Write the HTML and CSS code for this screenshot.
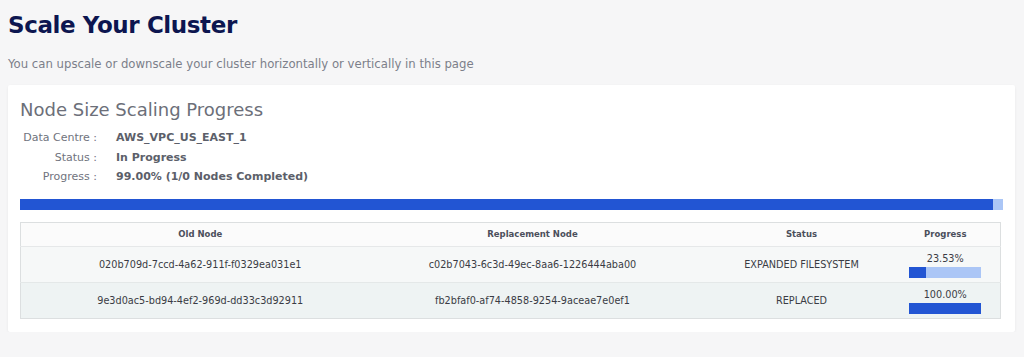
FILE: index.html
```html
<!DOCTYPE html>
<html>
<head>
<meta charset="utf-8">
<link rel="stylesheet" href="styles.css">
</head>
<body>
<div class="page">
  <h1 class="title">Scale Your Cluster</h1>
  <p class="subtitle">You can upscale or downscale your cluster horizontally or vertically in this page</p>
  <section class="card">
    <h2 class="card-title">Node Size Scaling Progress</h2>
    <div class="info">
      <div class="info-label">Data Centre :</div><div class="info-value">AWS_VPC_US_EAST_1</div>
      <div class="info-label">Status :</div><div class="info-value">In Progress</div>
      <div class="info-label">Progress :</div><div class="info-value">99.00% (1/0 Nodes Completed)</div>
    </div>
    <div class="bar main-bar"><div class="bar-fill" style="width:99%"></div></div>
    <table class="nodes">
      <colgroup>
        <col class="c1"><col class="c2"><col class="c3"><col class="c4">
      </colgroup>
      <thead>
        <tr><th>Old Node</th><th>Replacement Node</th><th class="stat">Status</th><th class="prog">Progress</th></tr>
      </thead>
      <tbody>
        <tr class="r1">
          <td>020b709d-7ccd-4a62-911f-f0329ea031e1</td>
          <td>c02b7043-6c3d-49ec-8aa6-1226444aba00</td>
          <td class="stat">EXPANDED FILESYSTEM</td>
          <td class="prog"><div class="pct">23.53%</div><div class="bar cell-bar"><div class="bar-fill" style="width:23.53%"></div></div></td>
        </tr>
        <tr class="r2">
          <td>9e3d0ac5-bd94-4ef2-969d-dd33c3d92911</td>
          <td>fb2bfaf0-af74-4858-9254-9aceae7e0ef1</td>
          <td class="stat">REPLACED</td>
          <td class="prog"><div class="pct">100.00%</div><div class="bar cell-bar"><div class="bar-fill" style="width:100%"></div></div></td>
        </tr>
      </tbody>
    </table>
  </section>
</div>
</body>
</html>
```

FILE: styles.css
```css
html, body {
  margin: 0;
  padding: 0;
  background: #f6f6f7;
  font-family: "DejaVu Sans", "Noto Sans", sans-serif;
}
.page {
  padding: 8px 9px 0 8px;
}
.title {
  margin: 0;
  font-size: 23px;
  line-height: 34px;
  font-weight: bold;
  color: #0d1650;
  letter-spacing: -0.4px;
}
.subtitle {
  margin: 14px 0 0 0;
  font-size: 11.7px;
  line-height: 16px;
  color: #7c7f8a;
}
.card {
  margin-top: 13px;
  background: #fff;
  border-radius: 2px;
  box-shadow: 0 1px 3px rgba(0,0,0,0.06);
  padding: 13px 12px 13px 12px;
}
.card-title {
  margin: 0;
  font-size: 18px;
  line-height: 24px;
  font-weight: normal;
  color: #6c6f79;
}
.info {
  margin-top: 6px;
  display: grid;
  grid-template-columns: 77px auto;
  column-gap: 19px;
  font-size: 11px;
  line-height: 19.5px;
}
.info-label {
  display: flex;
  justify-content: flex-end;
  white-space: nowrap;
  color: #70737d;
}
.info-value {
  font-weight: bold;
  color: #5c5f6a;
}
.bar {
  background: #abc6f6;
  height: 11px;
}
.bar-fill {
  background: #2255d3;
  height: 100%;
}
.main-bar {
  margin-top: 12px;
}
.nodes {
  margin-top: 12px;
  width: 980px;
  border-collapse: collapse;
  table-layout: fixed;
  border: 1px solid #dcdfe0;
  font-size: 9.7px;
}
.c1 { width: 359px; }
.c2 { width: 306px; }
.c3 { width: 205px; }
.c4 { width: 110px; }
.nodes thead tr { height: 24px; }
.nodes tbody tr { height: 36px; }
.nodes th {
  padding: 0;
  font-size: 8.5px;
  font-weight: bold;
  color: #4b4f5b;
  background: #fbfbfb;
  border-bottom: 1px solid #e6e8e9;
  text-align: center;
}
.nodes td {
  padding: 0;
  color: #3a3c44;
  text-align: center;
}
.nodes th.stat, .nodes td.stat {
  padding-left: 27px;
}
.nodes td.prog {
  padding-top: 6px;
  vertical-align: top;
}
.r1 td { background: #f6f8f8; border-bottom: 1px solid #e4e8e8; }
.r2 td { background: #eef3f3; }
.pct {
  line-height: 12px;
}
.cell-bar {
  width: 72px;
  margin: 2px auto 0 auto;
}
```
